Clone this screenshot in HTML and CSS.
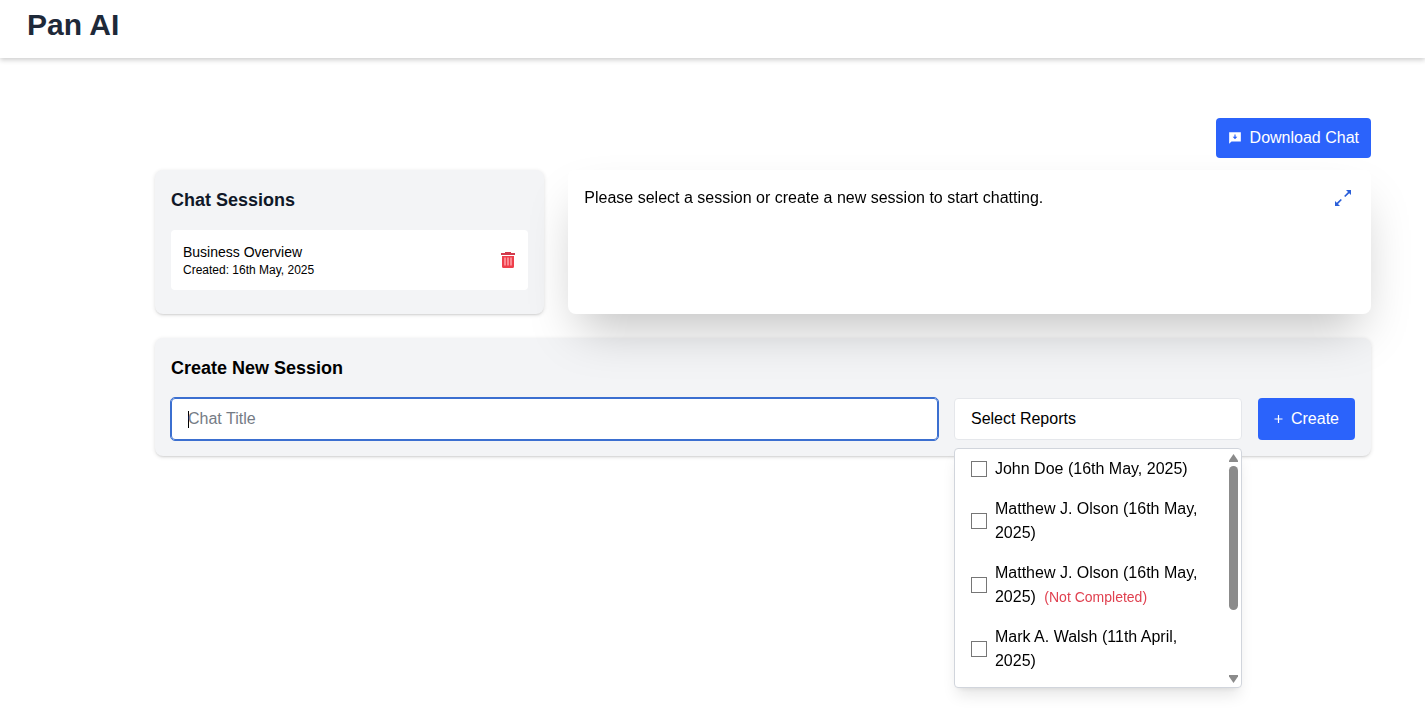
FILE: index.html
```html
<!DOCTYPE html>
<html lang="en">
<head>
  <meta charset="UTF-8" />
  <meta name="viewport" content="width=device-width, initial-scale=1.0"/>
  <title>Pan AI</title>
  <link rel="stylesheet" href="styles.css">
</head>
<body>
  <header class="topbar">
    <h1>Pan AI</h1>
  </header>

  <main class="content">
    <div class="toolbar">
      <button class="btn btn-download" type="button">
        <svg width="14" height="14" viewBox="0 0 24 24" aria-hidden="true">
          <path fill="currentColor" d="M22 2H2v20l4-4h16V2zm-6 8-4 4-4-4h3V6h2v4h3z"/>
        </svg>
        Download Chat
      </button>
    </div>

    <div class="panels">
      <section class="card sessions">
        <h2>Chat Sessions</h2>
        <div class="session">
          <div>
            <p class="session-name">Business Overview</p>
            <p class="session-date">Created: 16th May, 2025</p>
          </div>
          <button class="icon-btn delete" type="button" aria-label="Delete session">
            <svg width="16" height="18" viewBox="0 0 16 18" aria-hidden="true">
              <path fill="#d23a4c" d="M5 1h6v1h4v2H1V2h4z"/>
              <path fill="#ee3f4b" d="M2 5h12v10.500a1.500 1.500 0 0 1-1.500 1.500h-9A1.500 1.500 0 0 1 2 15.500z"/>
              <path stroke="#ffa3aa" stroke-width="1.500" d="M5 6.500v8M8 6.500v8M11 6.500v8"/>
            </svg>
          </button>
        </div>
      </section>

      <section class="chat">
        <p>Please select a session or create a new session to start chatting.</p>
        <button class="icon-btn expand" type="button" aria-label="Expand chat">
          <svg width="18" height="18" viewBox="0 0 18 18" aria-hidden="true">
            <path fill="currentColor" d="M12 1h5v5l-1.800-1.800-3.900 3.900-1.200-1.200L14 3zM6 17H1v-5l1.800 1.800 3.900-3.900 1.200 1.200L4 15z"/>
          </svg>
        </button>
      </section>
    </div>

    <section class="card create">
      <h2>Create New Session</h2>
      <form class="create-form">
        <input class="title-input" type="text" placeholder="Chat Title" aria-label="Chat Title" autofocus>
        <div class="reports">
          <button class="reports-toggle" type="button" aria-expanded="true">Select Reports</button>
          <div class="reports-menu">
            <div class="reports-list">
              <label class="report">
                <input type="checkbox">
                <span>John Doe (16th May, 2025)</span>
              </label>
              <label class="report">
                <input type="checkbox">
                <span>Matthew J. Olson (16th May, 2025)</span>
              </label>
              <label class="report">
                <input type="checkbox">
                <span>Matthew J. Olson (16th May, 2025) <small>(Not Completed)</small></span>
              </label>
              <label class="report">
                <input type="checkbox">
                <span>Mark A. Walsh (11th April, 2025)</span>
              </label>
            </div>
            <div class="scrollbar">
              <svg width="9" height="8" viewBox="0 0 9 8" aria-hidden="true"><path d="M4.500 0 9 6.500V8H0V6.500z"/></svg>
              <div class="track"><div class="thumb"></div></div>
              <svg width="9" height="8" viewBox="0 0 9 8" aria-hidden="true"><path d="M4.500 8 9 1.500V0H0v1.500z"/></svg>
            </div>
          </div>
        </div>
        <button class="btn btn-create" type="button">
          <svg width="9" height="9" viewBox="0 0 9 9" aria-hidden="true">
            <path stroke="currentColor" stroke-width="1.200" d="M4.500 0v8M0.500 4h8"/>
          </svg>
          Create
        </button>
      </form>
    </section>
  </main>
</body>
</html>
```

FILE: styles.css
```css
* {
  box-sizing: border-box;
}

body {
  min-height: 100vh;
  margin: 0;
  background: #fff;
  color: #000;
  font-family: "Liberation Sans", Arial, sans-serif;
  font-size: 16px;
  line-height: 24px;
}

h1, h2, p {
  margin: 0;
}

button, input {
  font: inherit;
}

button {
  cursor: pointer;
}

.topbar {
  padding: 7px 27px 15px;
  background: #fff;
  box-shadow: 0 2px 5px rgba(0, 0, 0, 0.2);
}

.topbar h1 {
  font-size: 30px;
  line-height: 36px;
  color: #1e2939;
}

.content {
  padding: 60px 54px 0 155px;
}

.toolbar {
  display: flex;
  justify-content: flex-end;
  margin-bottom: 12px;
}

.btn {
  display: flex;
  align-items: center;
  border: none;
  border-radius: 4px;
  background: #2b63fb;
  color: #fff;
  white-space: nowrap;
}

.btn-download {
  gap: 8px;
  padding: 8px 12px;
}

.panels {
  display: grid;
  grid-template-columns: repeat(3, 1fr);
  gap: 24px;
  margin-bottom: 24px;
}

.card {
  padding: 16px;
  border-radius: 8px;
  background: #f3f4f6;
  box-shadow: 0 1px 4px rgba(0, 0, 0, 0.12), 0 2px 2px -1px rgba(0, 0, 0, 0.1);
}

.card h2 {
  margin-bottom: 16px;
  font-size: 18px;
  line-height: 28px;
}

.sessions h2 {
  color: #101828;
}

.session {
  display: flex;
  align-items: center;
  justify-content: space-between;
  margin-bottom: 8px;
  padding: 12px;
  border-radius: 4px;
  background: #fff;
}

.session-name {
  font-size: 14px;
  line-height: 20px;
}

.session-date {
  font-size: 12px;
  line-height: 16px;
}

.icon-btn {
  display: flex;
  padding: 0;
  border: none;
  background: none;
}

/* sits above the create card so its shadow falls on it */
.chat {
  position: relative;
  grid-column: span 2;
  display: flex;
  align-items: flex-start;
  justify-content: space-between;
  padding: 16px;
  border-radius: 8px;
  background: #fff;
  box-shadow: 0 25px 50px -12px rgba(0, 0, 0, 0.25);
}

.expand {
  padding: 3px;
  color: #2b5fd9;
}

.create-form {
  display: flex;
  gap: 16px;
}

.title-input {
  flex: 1;
  min-width: 0;
  padding: 8px 16px;
  border: 1px solid #3b6fd0;
  border-radius: 4px;
  background: #fff;
}

.title-input:focus {
  outline: 1px solid #3b6fd0;
}

/* steady caret while the field is empty */
.title-input:placeholder-shown:focus {
  caret-color: transparent;
  background: linear-gradient(#000, #000) 16px center / 1px 17px no-repeat #fff;
}

.title-input::placeholder {
  color: #757b85;
}

.reports {
  position: relative;
  width: 288px;
}

.reports-toggle {
  display: block;
  width: 100%;
  padding: 8px 16px;
  border: 1px solid #e5e7eb;
  border-radius: 4px;
  background: #fff;
  color: #000;
  text-align: left;
}

.reports-menu {
  position: absolute;
  top: 100%;
  left: 0;
  z-index: 10;
  display: flex;
  width: 100%;
  height: 240px;
  margin-top: 8px;
  border: 1px solid #d1d5dc;
  border-radius: 4px;
  background: #fff;
  box-shadow: 0 10px 15px -3px rgba(0, 0, 0, 0.1), 0 4px 6px -4px rgba(0, 0, 0, 0.1);
}

.reports-list {
  flex: 1;
  overflow: hidden;
}

.report {
  display: flex;
  align-items: center;
  gap: 8px;
  padding: 8px 16px;
}

.report input {
  flex: none;
  appearance: none;
  width: 16px;
  height: 16px;
  margin: 0;
  border: 1px solid #767676;
  background: #fff;
}

.report input:checked {
  background: #2b63fb;
}

.report small {
  margin-left: 4px;
  font-size: 14px;
  color: #e0404f;
}

.scrollbar {
  display: flex;
  flex-direction: column;
  align-items: center;
  gap: 4px;
  width: 15px;
  padding: 5px 0 4px;
  fill: #8b8b8b;
}

.track {
  flex: 1;
  width: 9px;
}

.thumb {
  height: 70%;
  border-radius: 5px;
  background: #8b8b8b;
}

.btn-create {
  gap: 8px;
  padding: 8px 16px;
}
```
